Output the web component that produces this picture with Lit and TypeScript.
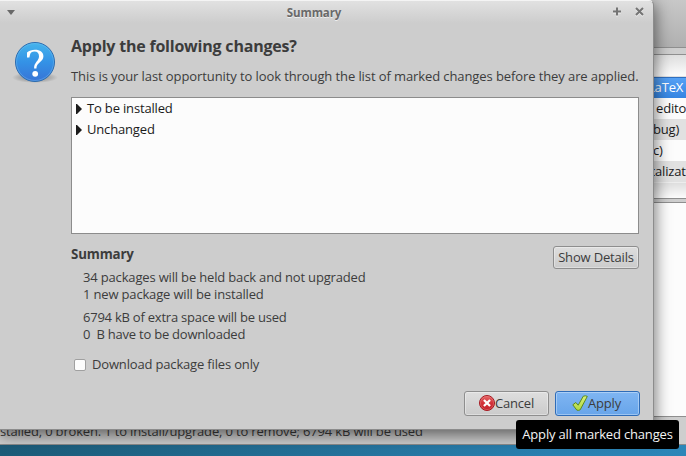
import { LitElement, html, css } from "lit";
import { customElement } from "lit/decorators.js";

const questionIcon = html`<svg class="question" width="48" height="48" viewBox="0 0 48 48">
  <defs>
    <linearGradient id="qf" x1="0" y1="0" x2="0" y2="1"><stop offset="0" stop-color="#45b5ec"/><stop offset=".5" stop-color="#3492e6"/><stop offset="1" stop-color="#3874d6"/></linearGradient>
    <radialGradient id="qs"><stop offset="0" stop-color="#000" stop-opacity=".38"/><stop offset=".7" stop-color="#000" stop-opacity=".14"/><stop offset="1" stop-color="#000" stop-opacity="0"/></radialGradient>
  </defs>
  <ellipse cx="24" cy="39.5" rx="23" ry="5.5" fill="url(#qs)"/>
  <circle cx="24" cy="24" r="19.5" fill="url(#qf)" stroke="#2b6cb0" stroke-width="1"/>
  <circle cx="24" cy="24" r="18.5" fill="none" stroke="#7cc4f3" stroke-opacity=".4"/>
  <path d="M16 19.500V14.500C18.200 12.700 20.800 11.800 24 11.800c5.200 0 8.400 2.500 8.400 6.500 0 5.800-7 6.200-7 12.200h-2.300c-.2-6.200 4.900-7.300 4.900-12.200 0-2.900-1.600-4.700-4.500-4.700-2.400 0-4 1.100-4.500 3.100l-.6 2.800z" fill="#fff"/>
  <circle cx="24.200" cy="35.800" r="2.900" fill="#fff"/>
</svg>`;

const cancelIcon = html`<svg width="16" height="16" viewBox="0 0 16 16">
  <defs><linearGradient id="cf" x1="0" y1="0" x2="0" y2="1"><stop offset="0" stop-color="#e66a6a"/><stop offset=".5" stop-color="#d2323a"/><stop offset="1" stop-color="#c4222c"/></linearGradient></defs>
  <circle cx="8" cy="8" r="7.500" fill="url(#cf)" stroke="#a51a22"/>
  <circle cx="8" cy="8" r="6.600" fill="none" stroke="#f08a8a" stroke-opacity=".5" stroke-width=".8"/>
  <path d="M5.700 5.700l4.600 4.600M10.300 5.700l-4.600 4.600" stroke="#fff" stroke-width="2.200" stroke-linecap="square"/>
</svg>`;

const applyIcon = html`<svg width="16" height="16" viewBox="0 0 16 16">
  <defs><linearGradient id="af" x1="0" y1="0" x2="0" y2="1"><stop offset="0" stop-color="#d9f07c"/><stop offset="1" stop-color="#b0d840"/></linearGradient></defs>
  <path d="M.8 9.800l3-2.300 2.400 2.700L11.300 1.200q2.200-.9 4 .2L8.200 14.800q-1.600 1-3.400.3z" fill="url(#af)" stroke="#5b8a1c" stroke-linejoin="round"/>
</svg>`;

const expander = html`<svg class="expander" width="6" height="10" viewBox="0 0 6 10"><path d="M0 0h1l5 5-5 5H0z" fill="#1c1c1c"/></svg>`;

@customElement("package-window")
export class PackageWindow extends LitElement {
  static styles = css`
    :host { display: flex; flex-direction: column; height: 445px; box-sizing: border-box; background: #cecece; border-bottom: 1px solid #8c8c8c; color: #1a1a1a; }
    .toolbar { height: 47px; border-bottom: 1px solid #8f8f8f; background: linear-gradient(#c8c8c8, #b0b0b0); }
    .list { margin-top: 6px; height: 143px; border: solid #8f8f8f; border-width: 1px 0; background: linear-gradient(#fcfcfc 127px, #dedede 128px, #fcfcfc 143px); }
    .head { height: 22px; background: linear-gradient(#dedede, #fcfcfc); box-sizing: border-box; border-bottom: 1px solid #e0e0e0; }
    .row { height: 21px; line-height: 20px; white-space: pre; overflow: hidden; background: #fcfcfc; box-sizing: border-box; padding-left: 648px; }
    .alt { background: #e1e1e1; }
    .sel { color: #fff; background: linear-gradient(#55a1f5, #3585e2); border-top: 1px solid #3070c0; line-height: 19px; }
    .r2 { padding-left: 656px; }
    .r3 { padding-left: 653px; }
    .r4 { padding-left: 653px; }
    .r5 { padding-left: 649px; }
    .details { margin-top: 3px; height: 213px; border: solid #8f8f8f; border-width: 1px 0; background: #fcfcfc; }
    .status { flex: 1; display: flex; align-items: flex-end; white-space: nowrap; line-height: 18px; padding-bottom: 4px; color: #3c3c3c; }
  `;
  render() {
    return html`
      <div class="toolbar"></div>
      <div class="list">
        <div class="head"></div>
        <div class="row sel">LaTeX e</div>
        <div class="row r2">editor</div>
        <div class="row alt r3">bug)</div>
        <div class="row r4">c)</div>
        <div class="row alt r5">calizati</div>
      </div>
      <div class="details"></div>
      <div class="status">stalled, 0 broken. 1 to install/upgrade, 0 to remove; 6794 kB will be used</div>
    `;
  }
}

@customElement("summary-dialog")
export class SummaryDialog extends LitElement {
  static styles = css`
    :host { display: flex; flex-direction: column; box-sizing: border-box; width: 654px; height: 430px; background: #cdcdcd; border: solid #8c8c8c; border-width: 0 1px 1px 0; border-top: 1px solid #f4f4f4; border-top-right-radius: 5px; box-shadow: 0 4px 16px 1px rgba(0,0,0,.55); color: #3c3c3c; }
    .title { display: grid; grid-template-columns: 1fr auto 1fr; align-items: center; height: 22px; padding: 0 9px 0 7px; background: linear-gradient(#e1e1e1, #cdcdcd); border-top-right-radius: 5px; box-sizing: border-box; }
    .title b { font-size: 11.5px; letter-spacing: -.1px; color: #696969; text-shadow: 0 1px #eee; line-height: 20px; padding-top: 1px; margin-left: -23px; }
    .wm { display: flex; justify-content: flex-end; gap: 13px; }
    svg { display: block; flex: none; }
    .content { display: grid; grid-template-columns: 71px 568px; }
    .question { margin: 15px 0 0 11px; }
    h1 { font-size: 16px; line-height: 22px; margin: 12px 0 0; letter-spacing: -.21px; white-space: nowrap; }
    p { margin: 0; line-height: 17px; white-space: nowrap; }
    .lead { margin-top: 11px; letter-spacing: -.095px; }
    .tree { height: 137px; margin-top: 12px; box-sizing: border-box; border: 1px solid #8c8c8c; background: #fcfcfc; color: #1a1a1a; }
    .node { display: flex; align-items: center; height: 21px; line-height: 19px; padding-left: 4px; gap: 5px; }
    .info { display: flex; justify-content: space-between; margin-top: 12px; }
    h2 { font-size: 13.3px; letter-spacing: -.15px; line-height: 16px; margin: 0 0 7px; }
    .lines { padding-left: 12px; margin-bottom: 6px; }
    .tight { letter-spacing: -.23px; }
    .button { display: flex; align-items: center; justify-content: center; box-sizing: border-box; padding-bottom: 2px; border: 1px solid #8e8e8e; border-radius: 3px; background: linear-gradient(#dedede, #cbcbcb); box-shadow: inset 0 0 0 1px rgba(255,255,255,.35); white-space: nowrap; }
    .show { width: 86px; height: 23px; }
    .check { display: flex; align-items: center; gap: 6px; height: 18px; margin-top: 7px; padding-left: 3px; }
    .check label { padding-bottom: 2px; }
    .box { width: 12px; height: 12px; box-sizing: border-box; border: 1px solid #a0a0a0; border-radius: 2px; background: #fcfcfc; }
    .actions { display: flex; justify-content: flex-end; gap: 6px; margin: auto 13px 13px 0; }
    .action { width: 85px; height: 25px; }
    .primary { padding-right: 2px; background: linear-gradient(#7fb5f2, #68a5ea); border-color: #2e6cb8; }
  `;
  render() {
    return html`
      <div class="title">
        <svg width="8" height="5" viewBox="0 0 8 5"><path d="M0 0h8L4 5z" fill="#696969"/></svg>
        <b>Summary</b>
        <div class="wm">
          <svg width="9" height="10" viewBox="0 0 9 10"><path d="M0 5.500h8M4 1.500v8" stroke="#eee" stroke-width="2"/><path d="M0 4.500h8M4 .5v8" stroke="#747474" stroke-width="2"/></svg>
          <svg width="9" height="10" viewBox="0 0 9 10"><path d="M1 2l7 7M8 2L1 9" stroke="#eee" stroke-width="2"/><path d="M1 1l7 7M8 1L1 8" stroke="#747474" stroke-width="2"/></svg>
        </div>
      </div>
      <div class="content">
        ${questionIcon}
        <div>
          <h1>Apply the following changes?</h1>
          <p class="lead">This is your last opportunity to look through the list of marked changes before they are applied.</p>
          <div class="tree">
            <div class="node">${expander}To be installed</div>
            <div class="node">${expander}Unchanged</div>
          </div>
          <div class="info">
            <div>
              <h2>Summary</h2>
              <div class="lines"><p>34 packages will be held back and not upgraded</p><p>1 new package will be installed</p></div>
              <div class="lines tight"><p>6794 kB of extra space will be used</p><p>0&nbsp; B have to be downloaded</p></div>
            </div>
            <div class="button show">Show Details</div>
          </div>
          <div class="check"><span class="box"></span><label>Download package files only</label></div>
        </div>
      </div>
      <div class="actions">
        <div class="button action">${cancelIcon}Cancel</div>
        <div class="button action primary">${applyIcon}Apply</div>
      </div>
    `;
  }
}

@customElement("app-root")
export class AppRoot extends LitElement {
  static styles = css`
    :host { display: block; position: relative; width: 686px; height: 456px; overflow: hidden; font: 13px "Open Sans", "Noto Sans", sans-serif; letter-spacing: -.165px; background: linear-gradient(90deg, #1c5b78, #2a80b0 80%, #2c86b8); }
    summary-dialog { position: absolute; left: 0; top: 0; }
    .tip { position: absolute; left: 516px; top: 420px; width: 163px; height: 29px; line-height: 29px; text-align: center; border-radius: 3px; background: #000; color: #f4f4f4; white-space: nowrap; }
  `;
  render() {
    return html`<package-window></package-window><summary-dialog></summary-dialog><div class="tip">Apply all marked changes</div>`;
  }
}
